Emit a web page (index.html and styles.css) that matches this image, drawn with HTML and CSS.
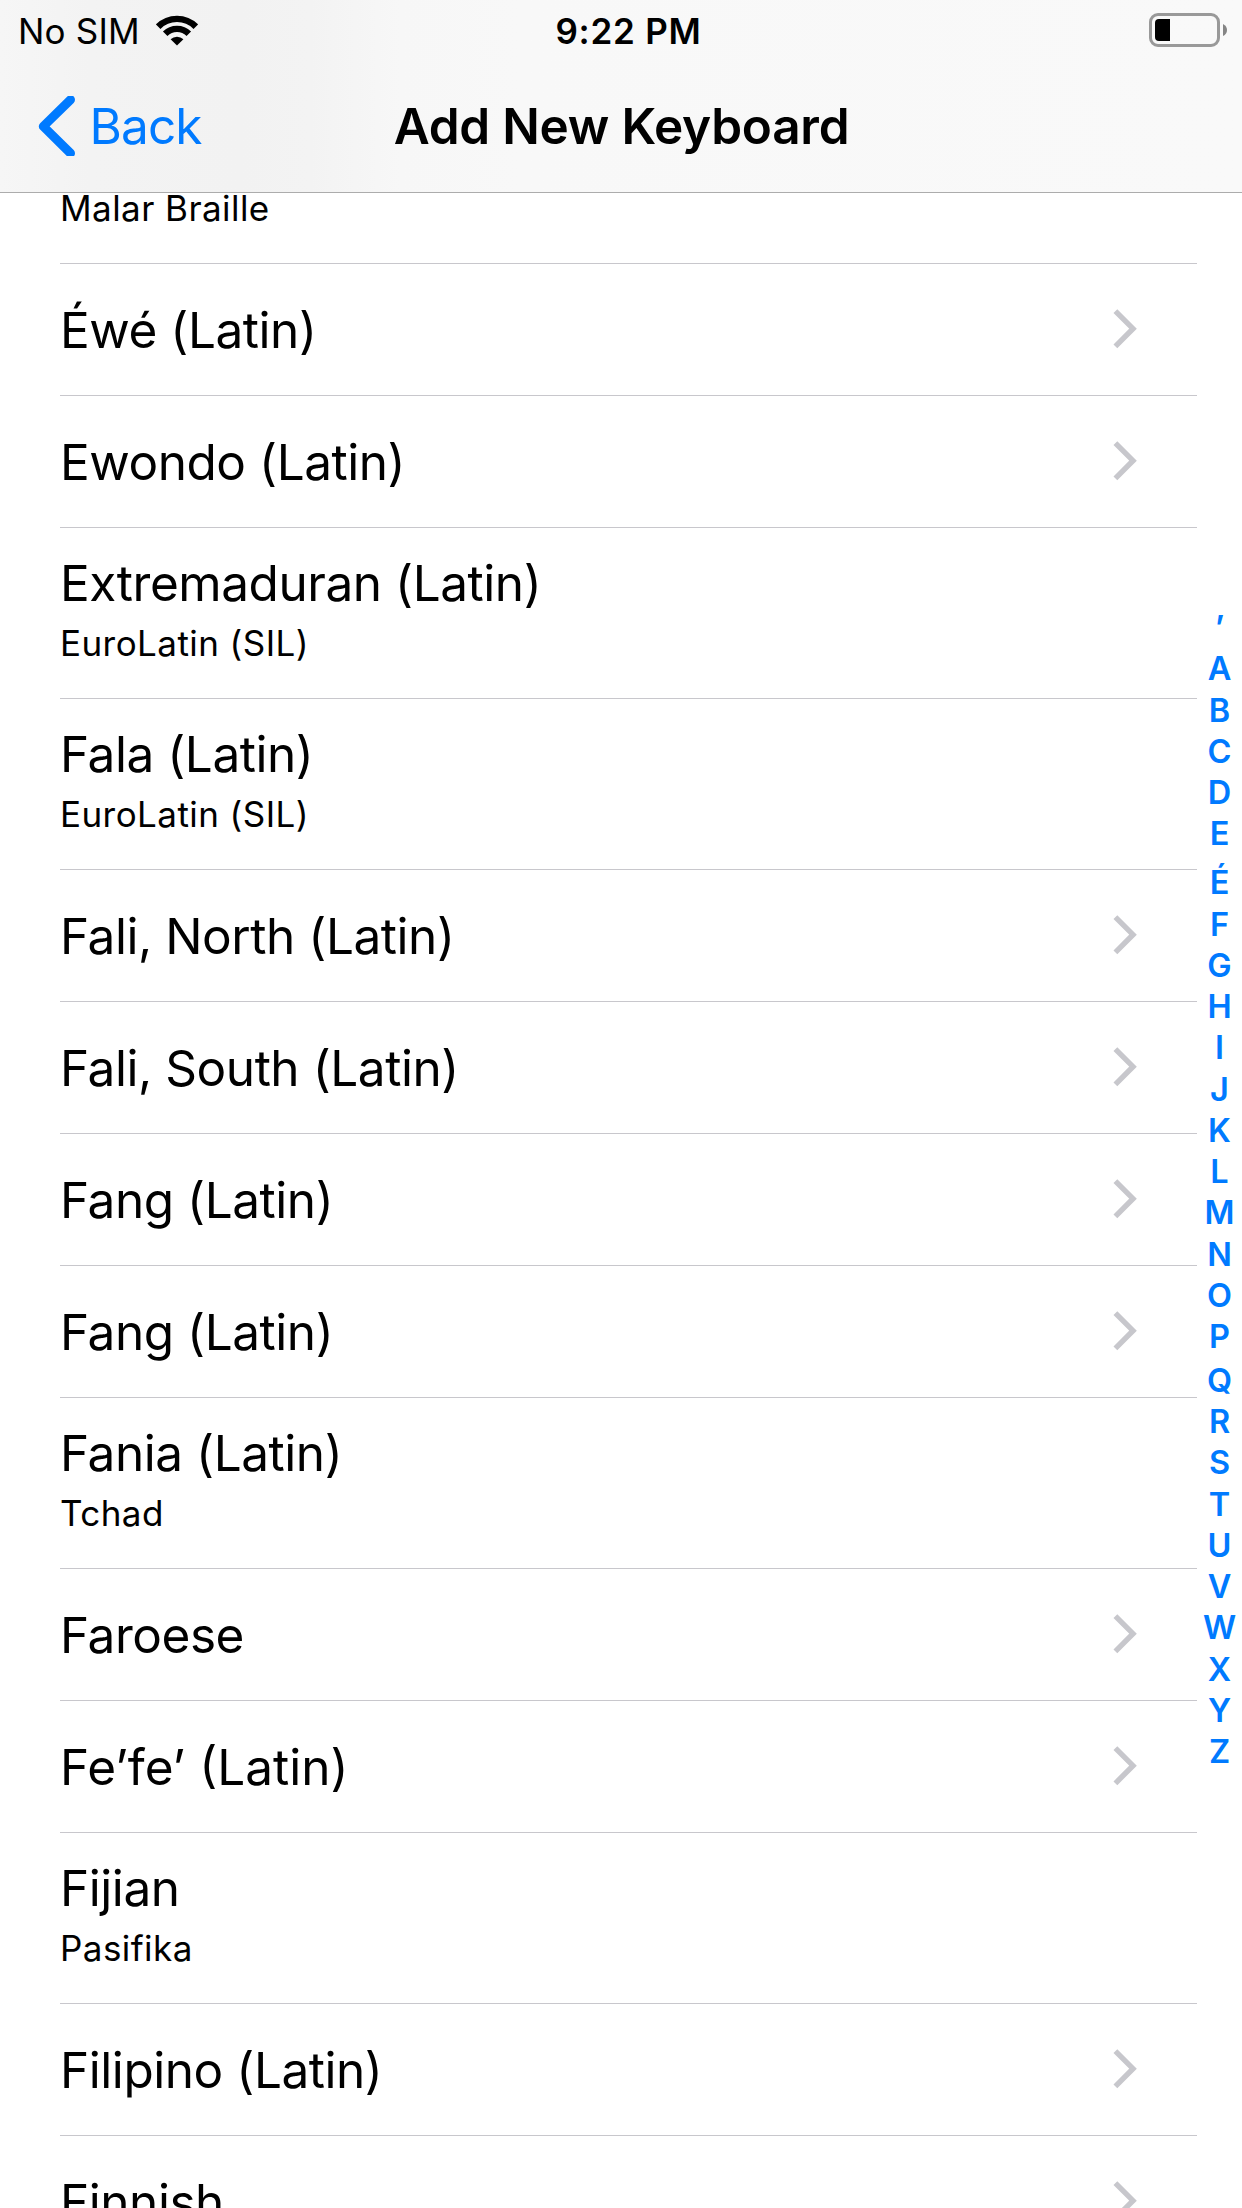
FILE: index.html
```html
<!DOCTYPE html>
<html lang="en">
<head>
<meta charset="utf-8">
<title>Add New Keyboard</title>
<link rel="stylesheet" href="styles.css">
</head>
<body>
<svg width="0" height="0" class="defs" aria-hidden="true">
  <symbol id="chevron" viewBox="0 0 26 42">
    <path d="M2.4 3.1 L20 20.7 L2.4 38.3" fill="none" stroke="#c7c7cc" stroke-width="5.4"/>
  </symbol>
</svg>

<header class="bar">
  <div class="status">
    <div class="carrier">
      <span>No SIM</span>
      <svg class="wifi" width="42" height="31" viewBox="0 0 42 31" aria-label="Wi-Fi">
        <g fill="none" stroke="#000" stroke-width="6.4">
          <path d="M2.2 11.7 A26.6 26.6 0 0 1 39.8 11.7"/>
          <path d="M9.2 18.7 A16.8 16.8 0 0 1 32.8 18.7"/>
        </g>
        <path d="M21 30.5 L14.6 24.2 A9.3 9.3 0 0 1 27.4 24.2 Z"/>
      </svg>
    </div>
    <span class="time">9:22 PM</span>
    <svg class="battery" width="80" height="34" viewBox="0 0 80 34" aria-label="Battery">
      <rect x="1.5" y="1.5" width="68" height="31" rx="7.5" fill="none" stroke="#999" stroke-width="3"/>
      <path d="M21 6 V28 H10 Q6 28 6 24 V10 Q6 6 10 6 Z"/>
      <path d="M74 11 Q78 13 78 17 Q78 21 74 23 Z" fill="#858585"/>
    </svg>
  </div>
  <nav class="nav">
    <a class="back">
      <svg width="38" height="60" viewBox="0 0 38 60" aria-hidden="true">
        <path d="M32.5 3.7 L5.3 30.4 L32.5 57.3" fill="none" stroke="#007aff" stroke-width="9" stroke-linecap="round" stroke-linejoin="round"/>
      </svg>
      <span>Back</span>
    </a>
    <h1 class="title">Add New Keyboard</h1>
  </nav>
</header>

<main class="content">
  <ul class="list">
    <li class="cell partial"><span class="sub">Malar Braille</span></li>
    <li class="cell single"><span class="name">Éwé (Latin)</span><svg class="chev"><use href="#chevron"/></svg></li>
    <li class="cell single"><span class="name">Ewondo (Latin)</span><svg class="chev"><use href="#chevron"/></svg></li>
    <li class="cell double"><span class="name">Extremaduran (Latin)</span><span class="sub">EuroLatin (SIL)</span></li>
    <li class="cell double"><span class="name">Fala (Latin)</span><span class="sub">EuroLatin (SIL)</span></li>
    <li class="cell single"><span class="name">Fali, North (Latin)</span><svg class="chev"><use href="#chevron"/></svg></li>
    <li class="cell single"><span class="name">Fali, South (Latin)</span><svg class="chev"><use href="#chevron"/></svg></li>
    <li class="cell single"><span class="name">Fang (Latin)</span><svg class="chev"><use href="#chevron"/></svg></li>
    <li class="cell single"><span class="name">Fang (Latin)</span><svg class="chev"><use href="#chevron"/></svg></li>
    <li class="cell double"><span class="name">Fania (Latin)</span><span class="sub">Tchad</span></li>
    <li class="cell single"><span class="name">Faroese</span><svg class="chev"><use href="#chevron"/></svg></li>
    <li class="cell single"><span class="name quoted">Fe’fe’ (Latin)</span><svg class="chev"><use href="#chevron"/></svg></li>
    <li class="cell double"><span class="name">Fijian</span><span class="sub">Pasifika</span></li>
    <li class="cell single"><span class="name">Filipino (Latin)</span><svg class="chev"><use href="#chevron"/></svg></li>
    <li class="cell single"><span class="name">Finnish</span><svg class="chev"><use href="#chevron"/></svg></li>
  </ul>
  <div class="index">
    <span>’</span><span>A</span><span>B</span><span>C</span><span>D</span><span>E</span><span class="accented">É</span><span>F</span><span>G</span><span>H</span><span>I</span><span>J</span><span>K</span><span>L</span><span>M</span><span>N</span><span>O</span><span>P</span><span class="tailed">Q</span><span>R</span><span>S</span><span>T</span><span>U</span><span>V</span><span>W</span><span>X</span><span>Y</span><span>Z</span>
  </div>
</main>
</body>
</html>
```
FILE: styles.css
```css
* { box-sizing: border-box; }

body {
  margin: 0;
  width: 1242px;
  height: 2208px;
  overflow: hidden;
  display: flex;
  flex-direction: column;
  background: #fff;
  color: #000;
  font-family: Inter, "Liberation Sans", sans-serif;
  font-size: 49.5px;
}

.defs { position: absolute; }

/* translucent header */
.bar {
  flex: none;
  height: 193px;
  border-bottom: 1px solid #acacac;
  background: linear-gradient(90deg, #f6f6f6 0, #f3f3f3 90px, #f2f2f2 240px, #f3f3f3 310px, #f7f7f7 400px, #f8f8f8 520px, #f9f9f9 100%);
}

.status {
  display: grid;
  grid-template-columns: 1fr auto 1fr;
  height: 60px;
  padding: 0 15px 0 18px;
  font-size: 35px;
  line-height: 62px;
}

.carrier {
  display: flex;
  gap: 16.5px;
  letter-spacing: .2px;
}

.wifi { margin-top: 14.5px; }

.time {
  padding-left: 12px;
  font-weight: 600;
  letter-spacing: .75px;
}

.battery {
  justify-self: end;
  margin: 13px -2px 0 0;
}

.nav {
  display: grid;
  grid-template-columns: 1fr auto 1fr;
  height: 132px;
  padding: 0 38px;
  line-height: 132px;
}

.back {
  display: flex;
  align-items: center;
  gap: 13.5px;
  color: #007aff;
  letter-spacing: -.9px;
}

.title {
  margin: 0;
  padding-left: 1px;
  font-size: 49.5px;
  font-weight: 600;
  letter-spacing: -.24px;
}

/* table */
.content {
  flex: 1;
  min-height: 0;
  display: flex;
}

.list {
  flex: none;
  width: 1137px;
  margin: 0 0 0 60px;
  padding: 0;
  list-style: none;
}

.cell {
  display: flex;
  border-bottom: 1px solid #c8c7cc;
}

.single {
  height: 132px;
  line-height: 132px;
  justify-content: space-between;
}

.double {
  height: 171px;
  padding-top: 25px;
  flex-direction: column;
  gap: 9px;
  line-height: 60px;
}

.partial {
  height: 71px;
  padding-bottom: 34px;
  align-items: flex-end;
}

.name { letter-spacing: -.45px; }

.quoted { letter-spacing: 0; }

.sub {
  font-size: 35px;
  line-height: 42px;
  letter-spacing: .44px;
}

.chev {
  width: 26px;
  height: 42px;
  margin: 43.5px 58px 0 0;
}

/* section index */
.index {
  flex: 1;
  display: flex;
  flex-direction: column;
  align-items: center;
  padding-top: 414px;
  color: #007aff;
  font-size: 32.5px;
  font-weight: 600;
  line-height: 41.25px;
}

.index span { height: 41.25px; }
.index .accented { margin-top: 7.75px; }
.index .tailed { margin-top: 2.5px; }
```
